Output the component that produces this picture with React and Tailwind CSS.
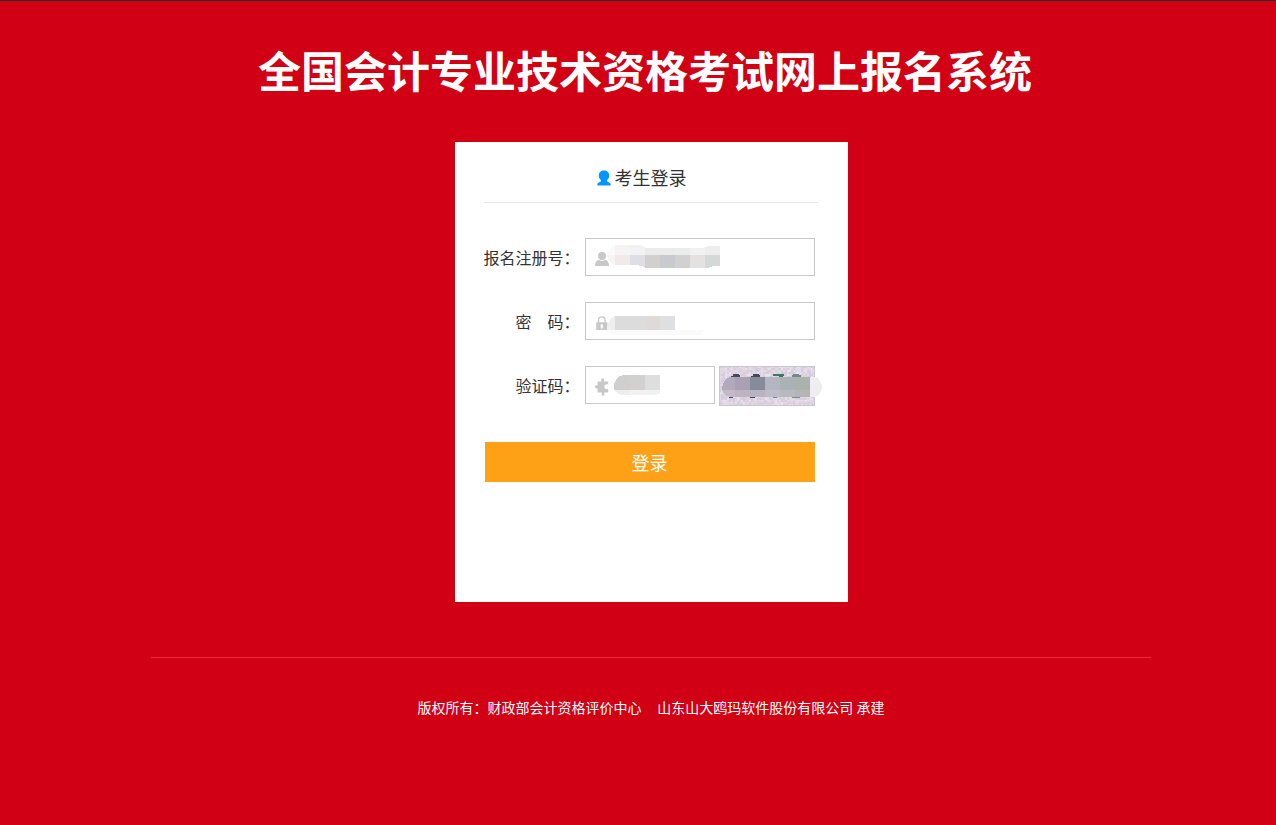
import React, { useState } from 'react';

// Repeatable speckle for the captcha background
const speckleColors = ['#e6d9ec', '#dacfe4', '#dedde4', '#e4d0dc', '#cfd3d3', '#eae0f0', '#d6c9e0', '#e0d8dc'];
const speckles = [];
let seed = 7;
for (let y = 0; y < 20; y++) {
    for (let x = 0; x < 48; x++) {
        seed = (seed * 1103515245 + 12345) % 2147483648;
        speckles.push({ x: x * 2, y: y * 2, fill: speckleColors[(seed >> 16) % 8] });
    }
}

const UserIcon = () => (
    <svg viewBox="0 0 14 16" className="mt-0.5 h-4 w-3.5" fill="#0096ff" aria-hidden="true">
        <path d="M7 0.5c-3.1 0-5.2 2-5.2 5 0 1.9.9 3.7 2.2 4.7 0 1-.6 1.6-1.7 2C1 12.700 .3 13.500.3 15.500h13.400c0-2-.7-2.800-2-3.300-1.100-.4-1.700-1-1.700-2 1.300-1 2.200-2.800 2.200-4.700 0-3-2.100-5-5.200-5z" />
    </svg>
);

const PersonIcon = () => (
    <svg viewBox="0 0 14 14" className="h-3.5 w-3.5" fill="#c8c8c8">
        <circle cx="7" cy="4" r="4" />
        <path d="M0 14c0-3.500 1.500-5.400 3.500-6.200C5.500 9.300 8.500 9.300 10.500 7.800 12.500 8.600 14 10.500 14 14z" />
    </svg>
);

const LockIcon = () => (
    <svg viewBox="0 0 14 14" className="h-3.5 w-3.5" fill="none">
        <path d="M3.500 7V4.200a3.300 3.300 0 0 1 6.600 0V7" stroke="#c8c8c8" strokeWidth="1.400" />
        <path fill="#c8c8c8" fillRule="evenodd" d="M1.200 6.200h11.200V14H1.200zM6.800 8a1.200 1.200 0 0 0-1 1.900V12.500h2V9.900a1.200 1.200 0 0 0-1-1.900z" />
    </svg>
);

const PuzzleIcon = () => (
    <svg viewBox="0 0 14 18" className="h-[18px] w-3.5" fill="#c8c8c8">
        <path d="M2.500 3.500H6.500C5.700 2.200 6.100.3 7.700.3S9.700 2.200 8.900 3.500H13.200V6.800C12 5.800 9.300 6.500 9.300 8.800S12 11.800 13.200 10.800V14.500H9C9.700 16 9.400 17.700 8 17.700S6.300 16 7 14.500H2.500V10.200C1.500 10.700 0 10.300 0 8.800S1.500 6.900 2.500 7.400z" />
    </svg>
);

// Pixelated covers that hide what has been filled in
const NumberMask = () => (
    <svg viewBox="0 0 114 25" className="h-[25px] w-[114px]" shapeRendering="crispEdges">
        <path fill="#fafafa" d="M9 0C4 1 1 5 0 10h9z" />
        <path fill="#f7f4f4" d="M0 10c1 6 4 9 9 10V10z" />
        <path fill="#f5f4f3" d="M8 0h15v10H8z" />
        <path fill="#f2f2f4" d="M23 0h9l6 2v8H23z" />
        <path fill="#f2eae8" d="M8 10h15v10H8z" />
        <path fill="#dfdee6" d="M23 10h15v12l-8-2h-7z" />
        <path fill="#eaebea" d="M38 3h30v7H38z" />
        <path fill="#ebedec" d="M68 3h15v7H68z" />
        <path fill="#f2f1f1" d="M83 3h15v7H83z" />
        <path fill="#ededee" d="M98 2l4-1h11v9H98z" />
        <path fill="#d2d0ce" d="M38 10h15v13H38z" />
        <path fill="#c9cacd" d="M53 10h15v13H53z" />
        <path fill="#d1d1d1" d="M68 10h15v13H68z" />
        <path fill="#e3e2e0" d="M83 10h15v13H83z" />
        <path fill="#d4d8d9" d="M98 10h15v11h-7l-5 2h-3z" />
    </svg>
);

const PasswordMask = () => (
    <svg viewBox="0 0 98 20" className="h-5 w-[98px]" shapeRendering="crispEdges">
        <path fill="#eeeeee" d="M8 0v14H0C0 7 3 2 8 0z" />
        <path fill="#dcdcdd" d="M8 0h30v14H8z" />
        <path fill="#dddad8" d="M38 0h15v14H38z" />
        <path fill="#dedfe0" d="M53 0h15v14H53z" />
        <path fill="#fafafa" d="M1 14h96c-1 3-3 5-7 5H9c-4 0-7-2-8-5z" />
    </svg>
);

const CodeMask = () => (
    <svg viewBox="0 0 50 20" className="h-5 w-[50px]" shapeRendering="crispEdges">
        <path fill="#cfcfce" d="M16 0H9C4 1 0 5 0 11v4h16z" />
        <path fill="#d3d1d0" d="M16 0h15v15H16z" />
        <path fill="#dedede" d="M31 0h15v15H31z" />
        <path fill="#ededed" d="M1 15h15v5h-7c-4 0-7-2-8-5z" />
        <path fill="#f2f2f2" d="M16 15h30v4l-6 1H16z" />
    </svg>
);

const Captcha = () => (
    <svg viewBox="0 0 104 40" className="h-10 w-[104px]" shapeRendering="crispEdges">
        {speckles.map((s) => (
            <rect key={`${s.x}-${s.y}`} x={s.x} y={s.y} width="2" height="2" fill={s.fill} />
        ))}
        <path fill="#4a4560" d="M14 8h6v1h1v3h-3v-1h-6v-1h2zM34 8h6v1h1v3h-9v-2h2zM10 31h4v1h-4zM31 31h5v1h-5z" />
        <path fill="#3d746c" d="M54 8h11v2h-1v2h-4v-2h-6z" />
        <path fill="#6f8c88" d="M74 8h6v1h2v3h-9V9h1zM73 31h8v1h-8zM54 31h4v1h-4z" />
        <rect x="0.5" y="0.5" width="95" height="39" fill="none" stroke="#c8c8cc" />
        <path fill="#b2aaba" d="M17 11h-6C6 12 3 17 3 24h14z" />
        <path fill="#a9a0b6" d="M16 11h15v13H16z" />
        <path fill="#868b99" d="M31 11h15v13H31z" />
        <path fill="#b4b5c1" d="M46 11h15v13H46z" />
        <path fill="#abb2b5" d="M61 11h15v13H61z" />
        <path fill="#adb1ae" d="M76 11h15v13H76z" />
        <path fill="#c5b8c8" d="M3 24h13v7h-5c-4-1-7-3-8-7z" />
        <path fill="#bdb3c4" d="M16 24h15v7H16z" />
        <path fill="#b6b4c2" d="M31 24h15v7H31z" />
        <path fill="#bdbdca" d="M46 24h15v7H46z" />
        <path fill="#b8b8c1" d="M61 24h15v7H61z" />
        <path fill="#b5b5b6" d="M76 24h15v7H76z" />
        <path fill="#efedf1" d="M91 11h4c5 1 8 5 8 10s-3 9-8 10h-4z" />
    </svg>
);

const Field = ({ id, label, type, value, onChange, icon, mask, maskClass, children }) => (
    <div className="flex items-center gap-[5px]">
        <label htmlFor={id} className="w-24 shrink-0 whitespace-pre text-right text-base text-[#333]">
            {label}
        </label>
        <div className="flex flex-1 items-start gap-1">
            <div className="relative min-w-0 flex-1">
                <input
                    id={id}
                    type={type}
                    value={value}
                    onChange={onChange}
                    autoComplete="off"
                    className="block h-[38px] w-full border border-[#c8c8c8] bg-white pr-2 pl-8 text-base outline-none"
                />
                <span className="pointer-events-none absolute inset-y-0 left-2.5 flex items-center pt-1" aria-hidden="true">
                    {icon}
                </span>
                <span className={maskClass} aria-hidden="true">{mask}</span>
            </div>
            {children}
        </div>
    </div>
);

const App = () => {
    const [form, setForm] = useState({ number: '', password: '', code: '' });

    const update = (name) => (e) => setForm({ ...form, [name]: e.target.value });

    const handleSubmit = (e) => {
        e.preventDefault();
    };

    return (
        <div
            lang="zh-CN"
            className="min-h-screen border-t border-[#2b2b2b] bg-[#d20015] pl-[26px] font-['Noto_Sans_CJK_SC',sans-serif]"
        >
            <header className="pt-[38px] pr-3">
                <h1 className="text-center text-[43px] leading-[60px] font-bold text-white">
                    全国会计专业技术资格考试网上报名系统
                </h1>
            </header>

            <main className="mx-auto mt-[43px] min-h-[460px] w-full max-w-[393px] bg-white pr-[30px] pl-[29px]">
                <h2 className="flex h-[61px] items-center justify-center gap-1 border-b border-[#e6e6e6] pt-2.5 pr-[18px] text-lg text-[#333]">
                    <UserIcon />
                    考生登录
                </h2>

                <form onSubmit={handleSubmit} className="flex flex-col gap-[26px] pt-[35px] pr-[3px]">
                    <Field
                        id="number"
                        label="报名注册号："
                        type="text"
                        value={form.number}
                        onChange={update('number')}
                        icon={<PersonIcon />}
                        mask={<NumberMask />}
                        maskClass="pointer-events-none absolute top-[7px] left-[22px]"
                    />
                    <Field
                        id="password"
                        label="密　码："
                        type="password"
                        value={form.password}
                        onChange={update('password')}
                        icon={<LockIcon />}
                        mask={<PasswordMask />}
                        maskClass="pointer-events-none absolute top-[14px] left-[22px]"
                    />
                    <Field
                        id="code"
                        label="验证码："
                        type="text"
                        value={form.code}
                        onChange={update('code')}
                        icon={<PuzzleIcon />}
                        mask={<CodeMask />}
                        maskClass="pointer-events-none absolute top-[9px] left-[29px]"
                    >
                        <button type="button" aria-label="验证码" className="-mr-2 -mb-0.5 shrink-0 cursor-pointer">
                            <Captcha />
                        </button>
                    </Field>
                    <button type="submit" className="mt-3 ml-px h-10 cursor-pointer bg-[#ffa117] text-lg text-white">
                        登录
                    </button>
                </form>
            </main>

            <footer className="mx-auto mt-[55px] max-w-[1000px] border-t border-[#f0283c] pt-[39px] text-center text-sm whitespace-pre-wrap text-white">
                版权所有：财政部会计资格评价中心{'\u00a0\u00a0\u00a0\u00a0'} 山东山大鸥玛软件股份有限公司 承建
            </footer>
        </div>
    );
};

export default App;
